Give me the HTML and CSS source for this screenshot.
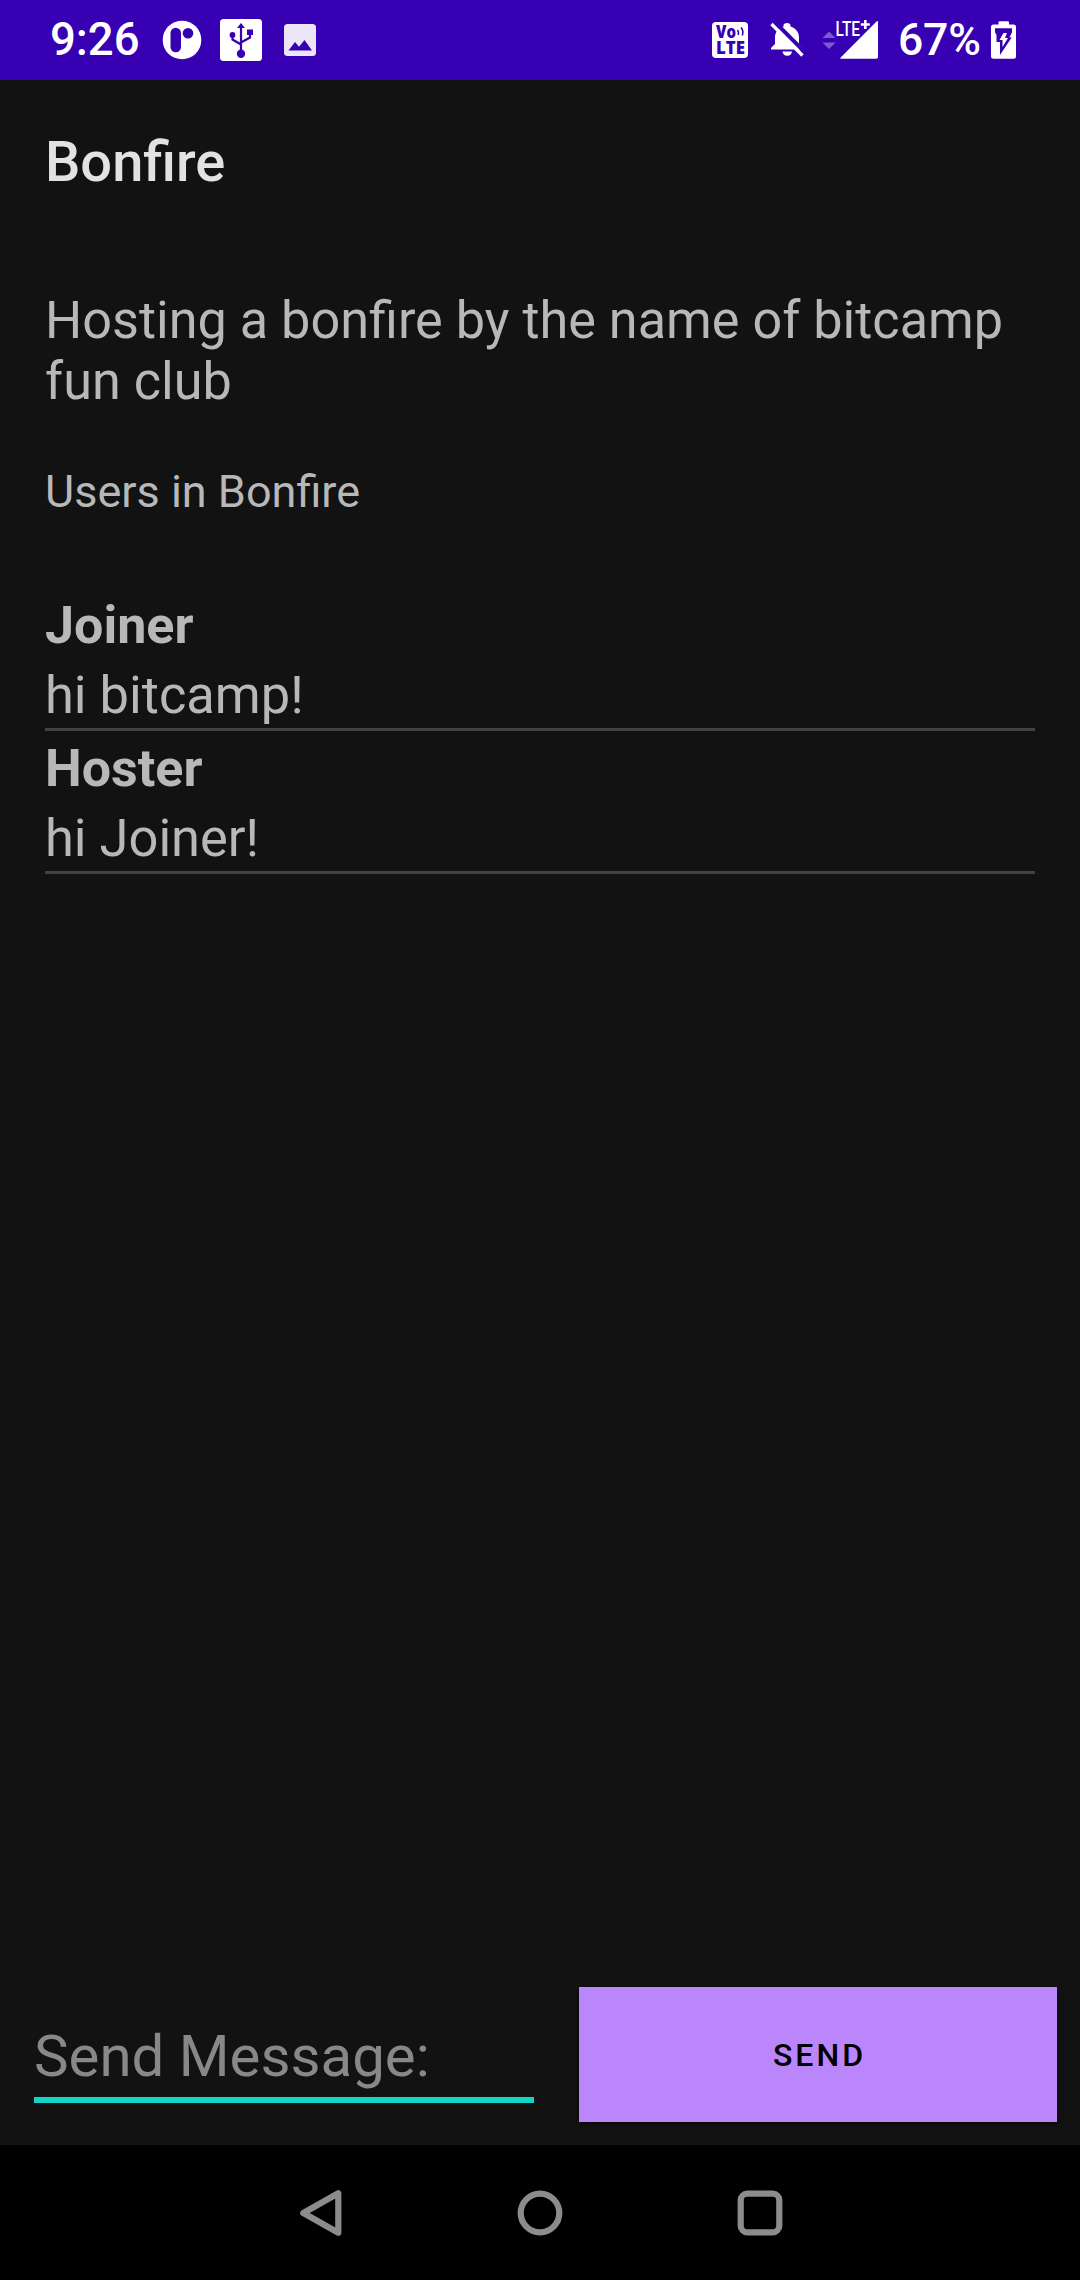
FILE: index.html
```
<!DOCTYPE html>
<html lang="en">
<head>
<meta charset="utf-8">
<title>Bonfire</title>
<link rel="stylesheet" href="styles.css">
</head>
<body>
<div class="screen">
  <header class="status">
    <span class="time">9:26</span>
    <svg class="i-app" width="40" height="40" viewBox="0 0 40 40"><circle cx="20" cy="20" r="19.3" fill="#fff"/><rect x="8.5" y="7.7" width="10.5" height="24.6" rx="5.2" fill="#3700b3"/><circle cx="26" cy="13.2" r="5.3" fill="#3700b3"/></svg>
    <svg class="i-usb" width="42" height="42" viewBox="0 0 42 42"><rect width="42" height="42" rx="3.5" fill="#fff"/><g fill="none" stroke="#3700b3" stroke-width="2.2"><path d="M21 8v26M12.5 16v4.5L21 25.5M30 14v4.5L21 23.5"/></g><g fill="#3700b3"><path d="M21 4l4 5h-8z"/><circle cx="12.5" cy="16" r="2.9"/><rect x="27" y="10.5" width="6" height="5.5"/><circle cx="21" cy="34.7" r="4.2"/></g></svg>
    <svg class="i-img" width="32" height="32" viewBox="0 0 32 32"><rect width="32" height="32" rx="3.5" fill="#ebe5f7"/><path d="M4.5 26.5L11 18l4 4.8L20.5 16l7.5 10.5z" fill="#3700b3"/></svg>
    <span class="fill"></span>
    <svg class="i-volte" width="36" height="36" viewBox="0 0 36 36"><rect width="36" height="36" rx="4" fill="#fff"/><g class="volte" fill="#3700b3"><text x="4" y="16" textLength="20" lengthAdjust="spacingAndGlyphs">Vo</text><text x="4" y="32" textLength="29" lengthAdjust="spacingAndGlyphs">LTE</text></g><path d="M25.5 8q1.500 2 .8 5M29 5.500q3 3.500 1.300 8" fill="none" stroke="#3700b3" stroke-width="1.600"/></svg>
    <svg class="i-bell" width="34" height="34" viewBox="0 0 34 34"><path d="M5 20V14C5 9.500 8.500 5 13.500 3.500V2.500a3.500 2.500 0 0 1 7 0V3.500C25.500 5 29 9 29 14v7l4 4v1.500H1V25l4-4z" fill="#fff"/><path d="M12.500 28.500h9.500a4.800 5 0 0 1-9.500 0z" fill="#fff"/><path d="M4.200-1.500L37 31.300" stroke="#3700b3" stroke-width="4"/><path d="M1.500 1L32.500 32.500" stroke="#fff" stroke-width="3.300"/></svg>
    <svg class="i-signal" width="57" height="40" viewBox="0 0 57 40"><path d="M.5 18L7 11.500l6.500 6.500zM.5 22.500L7 29l6.500-6.500z" fill="#7f59cf"/><path d="M19.500 38.800q-2 0-.8-1.400L54.500 1.600q1.500-1.300 1.500.8V37q0 1.800-1.800 1.800z" fill="#fff"/><text class="lte" x="13.500" y="15.700" textLength="24.500" lengthAdjust="spacingAndGlyphs">LTE</text><path d="M43.300 0v9M38.800 4.500h9" stroke="#fff" stroke-width="2.600"/></svg>
    <span class="pct">67%</span>
    <svg class="i-batt" width="25" height="38" viewBox="0 0 25 38"><path d="M7.500 3.500V1.500Q7.500.3 8.700.3h8.100q1.200 0 1.200 1.200v2h4.500q2.500 0 2.500 2.500v29.300q0 2.500-2.500 2.500H2.500Q0 37.800 0 35.300V6q0-2.500 2.500-2.500z" fill="#fff"/><path d="M4 7.300h17v4l-2.500 5.200h2.200L9 34V21H5.500V14L4 11.300z" fill="#3700b3"/><path d="M12.500 12h3.500l-2 5h3l-5.500 9v-7H8.500z" fill="#fff"/></svg>
  </header>
  <main class="content">
    <h1 class="title">Bonfire</h1>
    <p class="hosting">Hosting a bonfire by the name of bitcamp fun club</p>
    <p class="users">Users in Bonfire</p>
    <ul class="messages">
      <li class="message"><b class="author">Joiner</b><span>hi bitcamp!</span></li>
      <li class="message"><b class="author">Hoster</b><span>hi Joiner!</span></li>
    </ul>
  </main>
  <form class="composer">
    <div class="field">Send Message:</div>
    <button class="send" type="button">SEND</button>
  </form>
  <nav class="navbar">
    <svg width="48" height="48" viewBox="0 0 48 48"><path d="M42.300 4.300v39.400L7.300 24z"/></svg>
    <svg width="48" height="48" viewBox="0 0 48 48"><circle cx="24" cy="24" r="19.300"/></svg>
    <svg width="48" height="48" viewBox="0 0 48 48"><rect x="4.700" y="4.700" width="38.600" height="38.600" rx="6.500"/></svg>
  </nav>
</div>
</body>
</html>
```
FILE: styles.css
```
* { box-sizing: border-box; margin: 0; padding: 0; }
body { background: #121212; font-family: Roboto, sans-serif; }
.screen { width: 1080px; height: 2280px; display: flex; flex-direction: column; overflow: hidden; background: #121212; color: #b8b8b8; }

.status { height: 80px; flex: none; display: flex; align-items: center; background: #3700b3; color: #fff; padding: 0 64px 0 50px; }
.status svg { flex: none; display: block; overflow: visible; }
.fill { flex: 1; }
.time { width: 112px; font: 500 45.5px/54px Roboto, sans-serif; }
.pct { width: 93px; font: 500 44.5px/54px Roboto, sans-serif; letter-spacing: -.2px; }
.i-app { margin-right: 18px; }
.i-usb { margin-right: 22px; }
.i-volte { margin-right: 22px; }
.i-bell { margin-right: 18px; }
.i-signal { margin-right: 19px; }
.volte { font: 800 17px "Open Sans", sans-serif; }
.lte { font: 500 19.5px Roboto, sans-serif; fill: #fff; }

.content { flex: 1; padding: 49px 45px 0; }
.title { font-size: 56px; line-height: 66px; font-weight: 500; color: #e2e2e2; letter-spacing: 0; }
.hosting { margin-top: 95px; font-size: 52.2px; line-height: 61px; }
.users { margin-top: 53px; font-size: 45px; line-height: 53px; }
.messages { margin-top: 70px; list-style: none; }
.message { height: 143px; padding-top: 7px; display: flex; flex-direction: column; gap: 9px; border-bottom: 3px solid #414141; font-size: 52.4px; line-height: 61px; }
.author { font-size: 52px; font-weight: 700; }

.composer { flex: none; display: flex; align-items: flex-start; padding: 0 23px 23px 34px; gap: 45px; }
.field { width: 500px; height: 81px; margin-top: 35px; border-bottom: 6px solid #12d6c5; font-size: 58.2px; line-height: 68px; color: #888; }
.send { width: 478px; height: 135px; border: 0; padding: 1px 0 0 3px; background: #bb86fc; color: #000; font: 500 32px/38px Roboto, sans-serif; letter-spacing: 3px; box-shadow: 0 2px 5px rgba(0,0,0,.5); }

.navbar { height: 135px; flex: none; display: flex; justify-content: center; align-items: center; gap: 172px; background: #000; }
.navbar svg { fill: none; stroke: #8c8c8c; stroke-width: 6.2px; stroke-linejoin: round; }
```
